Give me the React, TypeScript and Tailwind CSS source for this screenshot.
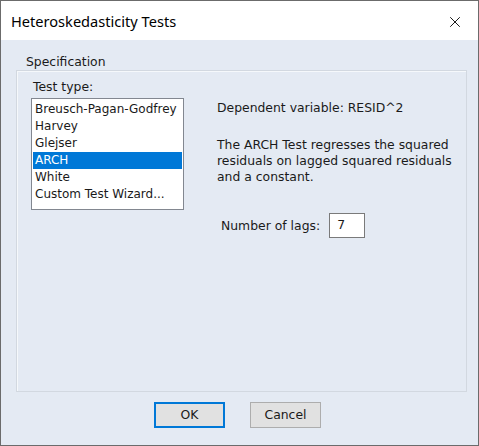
import { X } from "lucide-react";

const tests = [
  "Breusch-Pagan-Godfrey",
  "Harvey",
  "Glejser",
  "ARCH",
  "White",
  "Custom Test Wizard...",
];

const App = () => {
  return (
    <div className="w-[479px] h-[446px] border border-[#6b6b6b] bg-[#e4eaf3] flex flex-col font-['DejaVu_Sans',sans-serif] text-[12.4px] text-[#1a1a1a]">
      <div className="h-[39px] bg-white flex items-center justify-between pl-[10px] pr-[14px] pt-[2px] shrink-0">
        <span className="font-['Noto_Sans',sans-serif] text-[14.6px] text-black">
          Heteroskedasticity Tests
        </span>
        <X size={18} strokeWidth={1.2} className="text-black" />
      </div>

      <div className="flex flex-col pl-[15px]">
        <span className="mt-[14px] pl-[10px] leading-[16px]">Specification</span>
        <div className="w-[451px] h-[322px] border border-[#d2d8e0] shadow-[inset_1px_1px_0_#f5f8fb]">
          <div className="flex pt-[8px] pl-[14px]">
            <div className="flex flex-col">
              <span className="pl-[2px] leading-[16px]">Test type:</span>
              <div className="mt-[3px] w-[153px] h-[112px] border border-[#828790] bg-white pt-[2px] px-[1px] text-[12px]">
                {tests.map((t) => (
                  <div
                    key={t}
                    className={
                      t === "ARCH"
                        ? "h-[17px] leading-[17px] pl-[2px] bg-[#0078d7] text-white"
                        : "h-[17px] leading-[17px] pl-[2px]"
                    }
                  >
                    {t}
                  </div>
                ))}
              </div>
            </div>

            <div className="flex flex-col pl-[33px] pt-[21px]">
              <span className="leading-[16px]">Dependent variable: RESID^2</span>
              <p className="mt-[21px] leading-[16px]">
                The ARCH Test regresses the squared
                <br />
                residuals on lagged squared residuals
                <br />
                and a constant.
              </p>
              <div className="mt-[28px] flex items-center pl-[4px]">
                <span className="leading-[16px]">Number of lags:</span>
                <div className="ml-[9px] w-[36px] h-[25px] border border-[#7a7a7a] bg-white flex items-center pl-[7px]">
                  7
                </div>
              </div>
            </div>
          </div>
        </div>

        <div className="flex gap-[25px] pl-[138px] mt-[10px]">
          <button className="w-[71px] h-[26px] bg-[#e1e1e1] border-2 border-[#0078d7] text-[#1a1a1a]">
            OK
          </button>
          <button className="w-[71px] h-[26px] bg-[#e1e1e1] border border-[#adadad] text-[#1a1a1a]">
            Cancel
          </button>
        </div>
      </div>
    </div>
  );
};

export default App;
